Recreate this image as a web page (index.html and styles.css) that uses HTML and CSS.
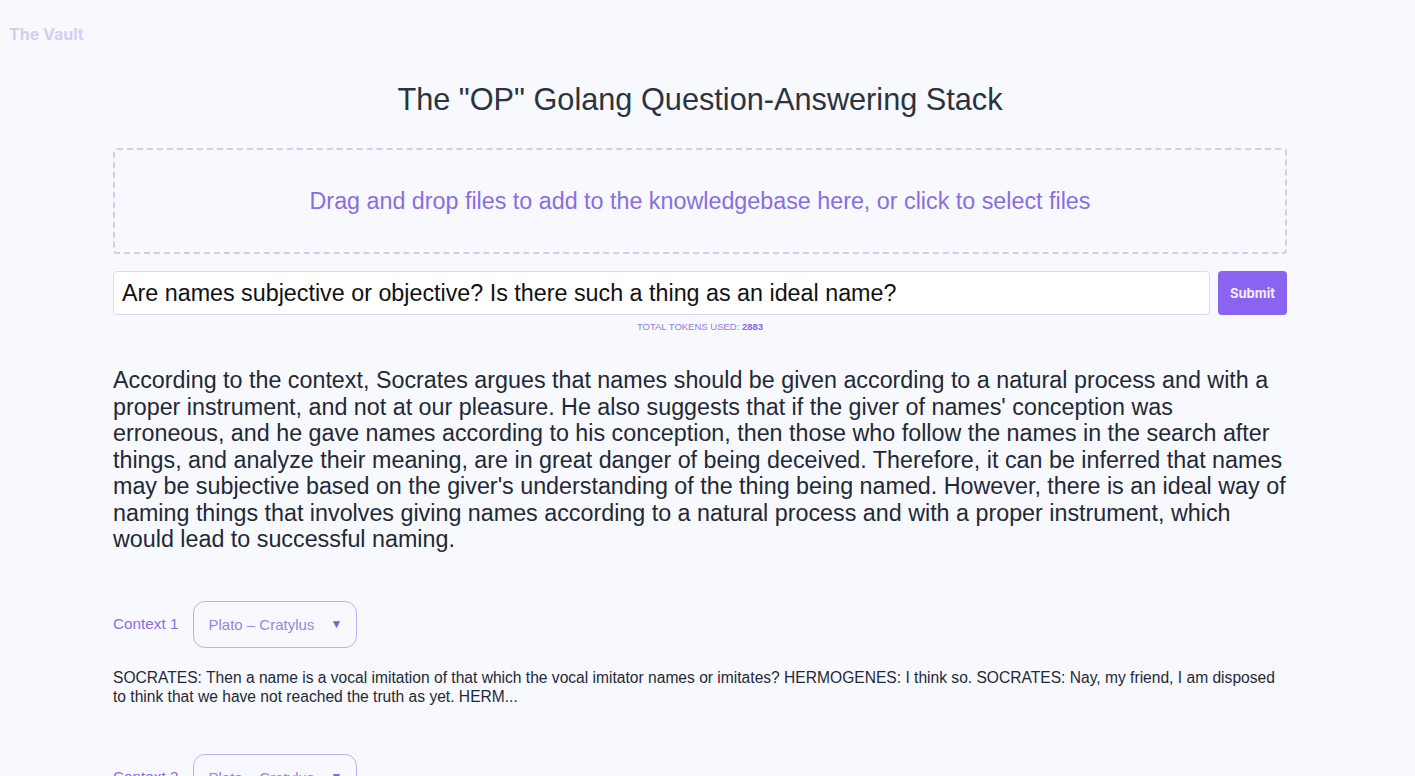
FILE: index.html
```html
<!DOCTYPE html>
<html lang="en">
<head>
<meta charset="utf-8">
<title>The Vault</title>
<link rel="stylesheet" href="styles.css">
</head>
<body>
<header class="topbar">
  <span class="brand">The Vault</span>
</header>
<main class="container">
  <h1 class="title">The "OP" Golang Question-Answering Stack</h1>
  <div class="dropzone">Drag and drop files to add to the knowledgebase here, or click to select files</div>
  <form class="ask">
    <div class="ask-row">
      <input class="ask-input" type="text" value="Are names subjective or objective? Is there such a thing as an ideal name?">
      <button class="ask-btn" type="button">Submit</button>
    </div>
    <div class="tokens">TOTAL TOKENS USED: <b>2883</b></div>
  </form>
  <p class="answer">According to the context, Socrates argues that names should be given according to a natural process and with a proper instrument, and not at our pleasure. He also suggests that if the giver of names' conception was erroneous, and he gave names according to his conception, then those who follow the names in the search after things, and analyze their meaning, are in great danger of being deceived. Therefore, it can be inferred that names may be subjective based on the giver's understanding of the thing being named. However, there is an ideal way of naming things that involves giving names according to a natural process and with a proper instrument, which would lead to successful naming.</p>

  <section class="context">
    <div class="ctx-head">
      <span class="ctx-label">Context 1</span>
      <div class="ctx-select"><span>Plato – Cratylus</span><span class="caret">▼</span></div>
    </div>
    <p class="ctx-text">SOCRATES: Then a name is a vocal imitation of that which the vocal imitator names or imitates? HERMOGENES: I think so. SOCRATES: Nay, my friend, I am disposed to think that we have not reached the truth as yet. HERM...</p>
  </section>
  <section class="context">
    <div class="ctx-head">
      <span class="ctx-label">Context 2</span>
      <div class="ctx-select"><span>Plato – Cratylus</span><span class="caret">▼</span></div>
    </div>
    <p class="ctx-text">SOCRATES: And the names which have been given to things are imitations of them...</p>
  </section>
</main>
</body>
</html>
```
FILE: styles.css
```css
* { box-sizing: border-box; }
html, body { margin: 0; padding: 0; }
body {
  background: #f8f9fe;
  font-family: "Liberation Sans", Arial, Helvetica, sans-serif;
  color: #1f2937;
  overflow: hidden;
  height: 776px;
}
.topbar {
  height: 68px;
  padding: 24px 0 0 9px;
}
.brand {
  font-family: Inter, "Liberation Sans", sans-serif;
  font-weight: 700;
  font-size: 16px;
  color: #d6cdf6;
  line-height: 20px;
}
.container {
  width: 1174px;
  margin-left: 113px;
}
.title {
  margin: 13px 0 0;
  text-align: center;
  font-weight: 400;
  font-size: 30.7px;
  line-height: 38px;
  color: #2a3340;
}
.dropzone {
  margin-top: 29px;
  height: 106px;
  border: 2px dashed #d2cdee;
  border-radius: 4px;
  display: flex;
  align-items: center;
  justify-content: center;
  font-size: 23.3px;
  color: #8a6ee0;
}
.ask { margin: 17px 0 0; }
.ask-row {
  display: flex;
  gap: 8px;
  height: 44px;
}
.ask-input {
  flex: 1;
  min-width: 0;
  height: 44px;
  border: 1px solid #ddd8f1;
  border-radius: 4px;
  background: #fff;
  padding: 0 8px;
  font-family: "Liberation Sans", Arial, sans-serif;
  font-size: 23.3px;
  color: #111;
  outline: none;
}
.ask-btn {
  width: 69px;
  height: 44px;
  border: 0;
  border-radius: 4px;
  background: #8b63f1;
  color: #f3eefe;
  font-family: Inter, "Liberation Sans", sans-serif;
  font-weight: 700;
  font-size: 13px;
}
.tokens {
  margin-top: 6px;
  text-align: center;
  font-size: 9.5px;
  color: #8f80dc;
}
.tokens b { color: #8a68e8; }
.answer {
  margin: 35px 0 0;
  font-size: 23.3px;
  line-height: 26.5px;
  color: #1f2937;
}
.context { margin-top: 48px; }
.context + .context { margin-top: 48px; }
.ctx-head {
  display: flex;
  align-items: center;
  gap: 15px;
}
.ctx-label {
  font-size: 15.3px;
  color: #8a6ee0;
}
.ctx-select {
  width: 164px;
  height: 47px;
  border: 1.5px solid #bfaef0;
  border-radius: 12px;
  display: flex;
  align-items: center;
  justify-content: space-between;
  padding: 0 14px;
  font-size: 15px;
  color: #9a85e0;
}
.caret {
  font-size: 12px;
  color: #7b5fd9;
}
.ctx-text {
  margin: 20px 0 0;
  font-size: 15.6px;
  line-height: 19px;
  color: #1f2937;
}
```
